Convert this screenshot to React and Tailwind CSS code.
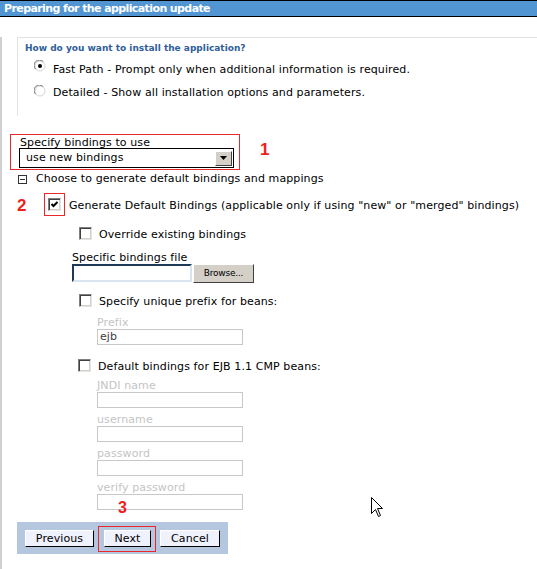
import React from 'react';

const Radio = ({ checked }) => (
  <svg width="12" height="12" viewBox="0 0 12 12" className="shrink-0">
    <circle cx="6" cy="6" r="5" fill="#fff" stroke="#d4d4d4" />
    <path d="M1.6 9.2 A5 5 0 0 1 9.2 1.6" fill="none" stroke="#6e6e6e" />
    {checked && <circle cx="6" cy="6" r="2" fill="#000" />}
  </svg>
);

const Checkbox = ({ checked }) => (
  <div className="w-[13px] h-[13px] shrink-0 bg-white border border-t-[#808080] border-l-[#808080] border-r-[#e4e4e4] border-b-[#e4e4e4] shadow-[inset_1px_1px_0_#404040,inset_-1px_-1px_0_#d4d0c8] flex items-center justify-center">
    {checked && (
      <svg width="9" height="9" viewBox="0 0 9 9">
        <path d="M1.5 4 L3.5 6 L7.5 2" fill="none" stroke="#000" strokeWidth="2" />
      </svg>
    )}
  </div>
);

const GrayField = ({ label, value, children }) => (
  <div className="ml-[95px]">
    <div className="h-[12px] leading-[12px] text-[#c4c4c4]">{label}</div>
    <div className="relative w-[146px] h-[16px] border border-[#c8c8c8] pl-[2px] leading-[14px] text-[#404040]">
      {value}
      {children}
    </div>
  </div>
);

const WinButton = ({ children, w }) => (
  <div className={`${w} h-[17px] bg-[#eff1fd] border border-t-white border-l-white border-r-black border-b-black text-center leading-[15px] text-[11px] text-black`}>
    {children}
  </div>
);

export default function App() {
  return (
    <div className="relative w-[537px] h-[569px] overflow-hidden bg-white text-[11px] tracking-[0.1px] text-black font-['DejaVu_Sans',sans-serif]">
      {/* Title bar */}
      <div className="h-[17px] bg-[#5196d3] border-y border-black pl-[4px] text-white font-bold text-[11px] tracking-[-0.6px] leading-[15px] whitespace-nowrap">
        Preparing for the application update
      </div>

      <div className="h-[552px] border-l-2 border-b-2 border-[#d0d0d0]">
        {/* Install options */}
        <div className="mt-[20px] ml-[15px] h-[79px] border-t border-l border-[#e2e2e2]">
          <div className="mt-[4px] pl-[7px] h-[12px] leading-[12px] font-bold text-[9px] tracking-normal text-[#2f5e9b]">
            How do you want to install the application?
          </div>
          <div className="mt-[8px] pl-[16px] flex items-start h-[16px]">
            <div className="mt-[-2px]"><Radio checked /></div>
            <div className="ml-[7px] leading-[16px] whitespace-nowrap">Fast Path - Prompt only when additional information is required.</div>
          </div>
          <div className="mt-[7px] pl-[16px] flex items-start h-[16px]">
            <div className="mt-[0px]"><Radio /></div>
            <div className="ml-[7px] leading-[16px] whitespace-nowrap">Detailed - Show all installation options and parameters.</div>
          </div>
        </div>

        {/* Bindings select */}
        <div className="mt-[18px] ml-[8px] flex items-start">
          <div className="w-[230px] h-[36px] border border-[#e8282a] pt-[2px]">
            <div className="pl-[9px] h-[11px] leading-[11px] whitespace-nowrap">Specify bindings to use</div>
            <div className="ml-[8px] w-[215px] h-[20px] border border-black bg-white flex items-center justify-between pl-[6px] pr-[1px]">
              <span>use new bindings</span>
              <div className="w-[17px] h-[15px] bg-[#d4d0c8] border border-t-white border-l-white border-r-[#404040] border-b-[#404040] flex items-center justify-center">
                <svg width="7" height="4" viewBox="0 0 7 4"><path d="M0 0 H7 L3.5 4 Z" fill="#000" /></svg>
              </div>
            </div>
          </div>
          <div className="ml-[20px] mt-[6px] leading-[19px] text-[17px] font-bold text-[#f01c1c] font-['Liberation_Sans',sans-serif]">1</div>
        </div>

        {/* Choose to generate */}
        <div className="mt-[3px] ml-[16px] flex items-center h-[12px]">
          <div className="w-[9px] h-[9px] border border-[#333] flex items-center justify-center">
            <div className="w-[5px] h-[1px] bg-[#333]" />
          </div>
          <div className="ml-[9px] leading-[12px] whitespace-nowrap">Choose to generate default bindings and mappings</div>
        </div>

        {/* Generate default bindings */}
        <div className="mt-[8px] flex items-start">
          <div className="w-[42px] pl-[15px] mt-[3px] leading-[19px] text-[17px] font-bold text-[#f01c1c] font-['Liberation_Sans',sans-serif]">2</div>
          <div className="w-[21px] h-[23px] border border-[#e8282a] pt-[4px] pl-[3px]">
            <Checkbox checked />
          </div>
          <div className="ml-[4px] mt-[5px] leading-[16px] whitespace-nowrap">Generate Default Bindings (applicable only if using "new" or "merged" bindings)</div>
        </div>

        {/* Override */}
        <div className="mt-[11px] ml-[77px] flex items-start h-[16px]">
          <Checkbox />
          <div className="ml-[7px] leading-[16px] whitespace-nowrap">Override existing bindings</div>
        </div>

        {/* Specific bindings file */}
        <div className="mt-[9px] ml-[70px]">
          <div className="h-[12px] leading-[12px] whitespace-nowrap">Specific bindings file</div>
          <div className="flex items-start">
            <div className="w-[120px] h-[18px] bg-white border-2 border-t-[#1e3a56] border-l-[#1e3a56] border-r-[#d8e4f0] border-b-[#d8e4f0]" />
            <div className="ml-[1px] w-[61px] h-[19px] bg-[#d4d0c8] border border-t-white border-l-white border-r-[#404040] border-b-[#404040] text-center leading-[17px] text-[9px] tracking-[-0.2px]">
              Browse...
            </div>
          </div>
        </div>

        {/* Unique prefix */}
        <div className="mt-[11px] ml-[77px] flex items-start h-[16px]">
          <Checkbox />
          <div className="ml-[7px] leading-[16px] whitespace-nowrap">Specify unique prefix for beans:</div>
        </div>
        <div className="mt-[7px]">
          <GrayField label="Prefix" value="ejb" />
        </div>

        {/* EJB 1.1 CMP */}
        <div className="mt-[14px] ml-[76px] flex items-start h-[16px]">
          <Checkbox />
          <div className="ml-[7px] leading-[16px] whitespace-nowrap">Default bindings for EJB 1.1 CMP beans:</div>
        </div>
        <div className="mt-[5px] flex flex-col gap-[6px]">
          <GrayField label="JNDI name" />
          <GrayField label="username" />
          <GrayField label="password" />
          <GrayField label="verify password">
            <div className="absolute left-[20px] top-[5px] leading-[16px] text-[16px] font-bold text-[#f01c1c] font-['Liberation_Sans',sans-serif]">3</div>
          </GrayField>
        </div>

        {/* Buttons */}
        <div className="mt-[12px] ml-[15px] w-[211px] h-[32px] bg-[#b5c7df] flex items-start">
          <div className="mt-[8px] ml-[8px]"><WinButton w="w-[69px]">Previous</WinButton></div>
          <div className="mt-[4px] ml-[4px] w-[58px] h-[26px] border border-[#e8282a] pt-[3px] pl-[5px]">
            <WinButton w="w-[47px]">Next</WinButton>
          </div>
          <div className="mt-[8px] ml-[4px]"><WinButton w="w-[60px]">Cancel</WinButton></div>
        </div>
      </div>

      {/* Mouse cursor */}
      <svg className="absolute left-[371px] top-[497px]" width="13" height="21" viewBox="0 0 13 21">
        <path d="M0.5 0.5 V16.5 L4.5 12.5 L7.5 19.5 L9.5 18.5 L6.5 11.5 H11.5 Z" fill="#fff" stroke="#000" strokeLinejoin="miter" />
      </svg>
    </div>
  );
}
